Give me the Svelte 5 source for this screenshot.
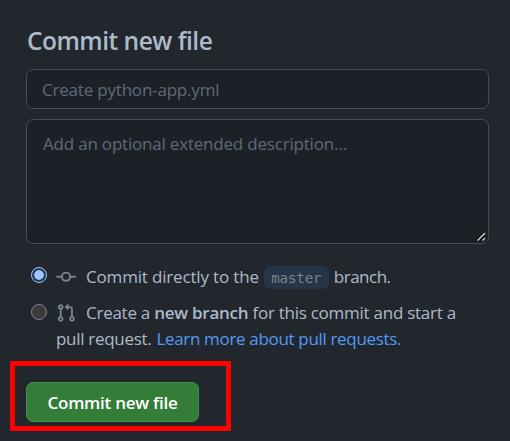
<script>
  let target = $state('direct');
</script>

<form class="commit-form" onsubmit={(e) => e.preventDefault()}>
  <h3>Commit new file</h3>
  <input class="field summary" type="text" placeholder="Create python-app.yml" aria-label="Commit summary" />
  <div class="area">
    <textarea class="field" placeholder="Add an optional extended description…" aria-label="Extended description"></textarea>
    <svg class="grip" width="10" height="10" viewBox="0 0 10 10" aria-hidden="true">
      <path d="M0 9 8.5.5M4.5 9.5l4-4" stroke="#080a0c" stroke-width="1.5" fill="none" />
      <path d="M1.5 9.5 9 2M6.5 9.5 9 7" stroke="#c9c9c9" stroke-width="1.5" fill="none" />
    </svg>
  </div>

  <label class="option first">
    <input type="radio" name="target" value="direct" bind:group={target} />
    <svg class="icon commit" width="20" height="20" viewBox="0 0 16 16" aria-hidden="true">
      <path fill="#768390" fill-rule="evenodd" d="M10.5 7.75a2.5 2.5 0 1 1-5 0 2.5 2.5 0 0 1 5 0zm1.43.75a4.002 4.002 0 0 1-7.86 0H.75a.75.75 0 0 1 0-1.5h3.32a4.001 4.001 0 0 1 7.86 0h3.32a.75.75 0 0 1 0 1.5h-3.32z" />
    </svg>
    <span class="line direct">Commit directly to the</span>
    <code>master</code>
    <span class="line tail">branch.</span>
  </label>

  <label class="option second">
    <input type="radio" name="target" value="branch" bind:group={target} />
    <svg class="icon" width="20" height="20" viewBox="0 0 16 16" aria-hidden="true">
      <path fill="#768390" fill-rule="evenodd" d="M7.177 3.073L9.573.677A.25.25 0 0 1 10 .854v4.792a.25.25 0 0 1-.427.177L7.177 3.427a.25.25 0 0 1 0-.354zM3.75 2.5a.75.75 0 1 0 0 1.5.75.75 0 0 0 0-1.5zm-2.25.75a2.25 2.25 0 1 1 3 2.122v5.256a2.251 2.251 0 1 1-1.5 0V5.372A2.25 2.25 0 0 1 1.5 3.25zM11 2.5h-1V4h1a1 1 0 0 1 1 1v5.628a2.251 2.251 0 1 0 1.5 0V5A2.5 2.5 0 0 0 11 2.5zm1 10.25a.75.75 0 1 1 1.5 0 .75.75 0 0 1-1.5 0zM3.75 12a.75.75 0 1 0 0 1.5.75.75 0 0 0 0-1.5z" />
    </svg>
    <span class="line create">Create a <b>new branch</b> for this commit and start a</span>
  </label>
  <div class="more"><span class="line pull">pull request.</span><a class="line" href="#pulls">Learn more about pull requests.</a></div>

  <div class="highlight"><button type="submit">Commit new file</button></div>
</form>

<style>
  :global(body) { margin: 0; background: #22272e; overflow: hidden; }
  .commit-form {
    box-sizing: border-box;
    width: 510px;
    height: 441px;
    padding: 25px 21px 0 26px;
    background: #22272e;
    color: #adbac7;
    font-family: "Open Sans", "Noto Sans", sans-serif;
    font-size: 17px;
  }
  h3 { margin: 0 0 12px 1px; font-size: 24.5px; line-height: 32px; font-weight: 600; letter-spacing: -0.5px; white-space: nowrap; }
  .field {
    display: block;
    box-sizing: border-box;
    width: 463px;
    margin: 0;
    border: 1px solid #444c56;
    border-radius: 7px;
    outline: none;
    background: #1c2128;
    color: #adbac7;
    font: inherit;
    letter-spacing: -0.2px;
    resize: none;
  }
  .field::placeholder { color: #606a76; opacity: 1; }
  .summary { height: 40px; padding: 0 15px; margin-bottom: 10px; }
  .area { position: relative; height: 125px; }
  textarea { height: 125px; padding: 12px 15px 12px 16px; line-height: 25px; overflow: hidden; }
  .grip { position: absolute; right: 3px; bottom: 3px; }
  .option { display: flex; align-items: center; height: 36px; }
  .first { margin-top: 14px; }
  .second { margin-top: 1px; }
  .option input {
    appearance: none;
    flex: none;
    box-sizing: border-box;
    width: 16px;
    height: 16px;
    margin: -2px 9px 0 5px;
    border: 1px solid #858585;
    border-radius: 50%;
    background: #3b3b3b;
  }
  .option input:checked { border: 1.5px solid #99c8ff; background: radial-gradient(circle, #99c8ff 0 4.4px, #263750 5.2px); }
  .icon { flex: none; margin-right: 10px; }
  .commit { margin-top: 1px; }
  .line { white-space: nowrap; line-height: 26px; letter-spacing: -0.3px; }
  .direct { margin-top: 1px; letter-spacing: -0.17px; }
  .tail { margin-top: 1px; letter-spacing: -0.5px; }
  .create { letter-spacing: -0.26px; }
  code {
    box-sizing: border-box;
    width: 65px;
    height: 23px;
    margin: 2px 5px 0;
    border-radius: 7px;
    background: #263648;
    color: #768390;
    font: 14.2px/25px "DejaVu Sans Mono", monospace;
    letter-spacing: -0.2px;
    text-align: center;
  }
  b { font-weight: 600; }
  .more { display: flex; margin: -5px 0 0 30px; height: 26px; }
  a { margin-left: 5px; color: #539bf5; text-decoration: none; }
  a.line { letter-spacing: -0.33px; }
  .highlight {
    box-sizing: border-box;
    width: 221px;
    height: 70px;
    margin: 9px 0 0 -16px;
    padding: 16px 11px;
    border: 5px solid #f00;
  }
  button {
    display: block;
    box-sizing: border-box;
    width: 173px;
    height: 40px;
    padding: 1px 0 0;
    border: 1px solid #4b8b50;
    border-radius: 7px;
    background: #347d39;
    color: #fff;
    font: 600 17px/38px "Open Sans", "Noto Sans", sans-serif;
    letter-spacing: -0.25px;
    white-space: nowrap;
  }
</style>
